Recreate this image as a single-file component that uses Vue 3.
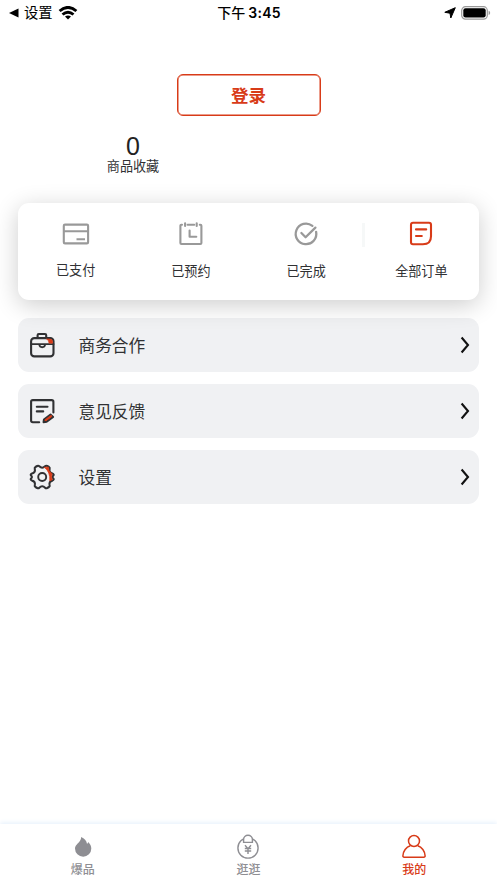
<script setup>
const orders = [
  { id: 'paid', label: '已支付' },
  { id: 'booked', label: '已预约' },
  { id: 'done', label: '已完成' },
  { id: 'all', label: '全部订单' },
]
const menu = [
  { id: 'business', label: '商务合作' },
  { id: 'feedback', label: '意见反馈' },
  { id: 'settings', label: '设置' },
]
</script>

<template>
  <div class="screen">
    <header class="status">
      <div class="status-left">
        <svg class="back" width="10" height="10" viewBox="0 0 10 10"><path d="M0 5 9.5.4V9.6Z" fill="#000" /></svg>
        <span class="back-label">设置</span>
        <svg class="wifi" width="20" height="14" viewBox="0 0 20 14">
          <g fill="none" stroke="#000" stroke-width="2.9">
            <path d="M1.6 5Q10-2.2 18.4 5" /><path d="M4.5 8.5Q10 3.8 15.5 8.5" />
          </g>
          <path d="M7 10.5Q10 8.4 13 10.5L10 13.6Z" fill="#000" />
        </svg>
      </div>
      <div class="time"><span>下午</span><b>3:45</b></div>
      <div class="status-right">
        <svg width="12" height="12" viewBox="0 0 12 12"><path d="M11.3.7 6.8 11 6 6.2.8 5.3Z" fill="#000" stroke="#000" stroke-width="1" stroke-linejoin="round" /></svg>
        <svg width="30" height="14" viewBox="0 0 30 14">
          <rect x=".7" y=".7" width="25.6" height="12.4" rx="3.8" fill="none" stroke="#999" stroke-width="1.2" />
          <rect x="2.3" y="2.3" width="22.4" height="9.2" rx="2.2" fill="#000" />
          <path d="M27.6 4.8Q29.2 5.4 29.2 6.9T27.6 9Z" fill="#999" />
        </svg>
      </div>
    </header>

    <button class="login">登录</button>
    <div class="favorites">
      <strong>0</strong>
      <span>商品收藏</span>
    </div>

    <section class="orders">
      <div v-for="o in orders" :key="o.id" class="order" :class="o.id">
        <svg class="order-icon" width="30" height="30" viewBox="0 0 30 30" fill="none" stroke="#999" stroke-width="2.1" stroke-linecap="round" stroke-linejoin="round">
          <template v-if="o.id === 'paid'">
            <rect x="2.8" y="5.6" width="24.3" height="18.8" rx="1.2" /><path d="M3 12.2H27M15.5 20.2H24" stroke-linecap="butt" />
          </template>
          <template v-else-if="o.id === 'booked'">
            <path d="M6 5.8H5.4Q4.4 5.8 4.4 6.8V24Q4.4 25 5.4 25H24.4Q25.4 25 25.4 24V6.8Q25.4 5.8 24.4 5.8H23.8M11.6 5.8H18.2" />
            <path d="M9.1 4.2V7M20.7 4.2V7M13.6 11.6V17.7H20.3" />
          </template>
          <template v-else-if="o.id === 'done'">
            <path d="M21.4 6.8A10.3 10.3 0 1 0 25.1 12.8M10.4 14 14.6 18.2 24.4 8.6" stroke-width="2.3" />
          </template>
          <g v-else stroke="#d83b18">
            <path d="M5 5.7Q5 3.7 7 3.7H23Q25 3.7 25 5.7V17.2Q25 25.3 16.9 25.3H7Q5 25.3 5 23.3Z" />
            <path d="M10 10.4H20.2M10 17H15.8" />
          </g>
        </svg>
        <span class="order-label">{{ o.label }}</span>
      </div>
    </section>

    <nav class="menu">
      <div v-for="m in menu" :key="m.id" class="row">
        <svg width="30" height="30" viewBox="0 0 30 30" fill="none" stroke="#303133" stroke-width="2.1" stroke-linecap="round" stroke-linejoin="round">
          <template v-if="m.id === 'business'">
            <rect x="4.1" y="8.1" width="22.4" height="18.3" rx="3.2" />
            <path d="M10.6 7.8V5.2Q10.6 4 11.8 4H18Q19.2 4 19.2 5.2V7.8" />
            <path d="M4.1 14.1H26.5M12.3 14.5Q12.6 17.2 15.2 17.2T18.1 14.5" stroke-width="1.9" />
            <path d="M19.8 9H22.9Q25.6 9.2 25.6 11.8V13.2H22Q22 10.6 19.8 9Z" fill="#d83b18" stroke="#d83b18" stroke-width=".6" />
          </template>
          <template v-else-if="m.id === 'feedback'">
            <path d="M12.2 26.2H5.8Q4.1 26.2 4.1 24.5V5.6Q4.1 4.1 5.8 4.1H24.7Q26.4 4.1 26.4 5.7V16.5M9.8 10.8H20.5M9.8 15.4H16.2" />
            <path d="M16.9 23.5 23.5 18.4 26.2 20.9 19.7 25.8 16.5 26.2Z" fill="#d83b18" stroke-width="1.9" />
            <path d="M18.8 24 24.2 20" stroke="#d83b18" stroke-width="1.9" />
          </template>
          <template v-else>
            <path d="M10.2 4Q11.4 3.4 12.3 4.3Q15.2 7.2 18.1 4.3Q19 3.4 20.2 4L22 5Q23 5.7 22.6 7Q21.8 10.6 25.4 11.4Q26.4 11.7 26.7 12.8Q26.7 13.3 25.9 14Q25 15 25.9 16Q26.7 16.7 26.7 17.2Q26.4 18.3 25.4 18.6Q21.8 19.4 22.6 23Q23 24.3 22 25L20.2 26Q19 26.6 18.1 25.7Q15.2 22.8 12.3 25.7Q11.4 26.6 10.2 26L8.4 25Q7.4 24.3 7.8 23Q8.6 19.4 5 18.6Q4 18.3 3.7 17.2Q3.7 16.7 4.5 16Q5.4 15 4.5 14Q3.7 13.3 3.7 12.8Q4 11.7 5 11.4Q8.6 10.6 7.8 7Q7.4 5.7 8.4 5Z" stroke-width="2.1" />
            <path d="M17.6 5.4 21.3 5 22 8.6 25 11.8 24.5 15 25.2 17.7 22.8 18.8Q23.5 10 17.6 5.4Z" fill="#d83b18" stroke="#d83b18" stroke-width=".8" />
            <circle cx="15.2" cy="15" r="4" stroke-width="1.9" />
          </template>
        </svg>
        <span class="row-label">{{ m.label }}</span>
        <svg class="chevron" width="10" height="18" viewBox="0 0 10 18"><path d="M1.6 1.5 8 9 1.6 16.5" fill="none" stroke="#111" stroke-width="2.1" /></svg>
      </div>
    </nav>

    <footer class="tabs">
      <div class="tab">
        <svg width="28" height="28" viewBox="0 0 28 28"><path d="M12.2 4C15.4 5.3 17.5 7.8 18 10.7Q19 10.6 19.1 9C21.2 10.7 22.3 13 22.3 15.6A8.1 8.1 0 0 1 6 15.6C6 12.2 8.8 10.7 10.9 7.9Q12.2 6.1 12.2 4Z" fill="#8e8e93" /></svg>
        <span>爆品</span>
      </div>
      <div class="tab">
        <svg width="28" height="28" viewBox="0 0 28 28" fill="none" stroke="#8e8e93" stroke-width="1.4">
          <circle cx="14" cy="15" r="10.1" /><path d="M9.6 9.4V6.5A4.4 4.3 0 0 1 18.4 6.5V9.4Z" fill="#fff" /><path d="M11 12.2 14 15.6 17 12.2M10.8 15.5H17.2M10.8 18H17.2M14 15.3V21" />
        </svg>
        <span>逛逛</span>
      </div>
      <div class="tab active">
        <svg width="28" height="28" viewBox="0 0 28 28" fill="none" stroke="#d83b18" stroke-width="1.5"><circle cx="14" cy="8" r="5.5" /><path d="M10.3 12.7C6.2 14 3.1 18.2 2.9 22.7Q2.8 24.2 4.2 24.2H23.8Q25.2 24.2 25.1 22.7C24.9 18.2 21.8 14 17.7 12.7" /></svg>
        <span>我的</span>
      </div>
    </footer>
  </div>
</template>

<style>
body { margin: 0; background: #fff; }
</style>

<style scoped>
.screen { box-sizing: border-box; width: 100%; height: 883px; display: flex; flex-direction: column; overflow: hidden; background: #fff; color: #303133; font-family: Inter, "Noto Sans CJK SC", sans-serif; }
.status { height: 26px; flex: none; display: grid; grid-template-columns: 1fr auto 1fr; align-items: center; color: #000; padding: 0 6px 0 9px; }
.status-left { display: flex; align-items: center; }
.back-label { margin-left: 5px; font-size: 14.3px; line-height: 24px; }
.wifi { margin-left: 5px; }
.time { display: flex; gap: 3px; align-items: baseline; margin-right: 2px; font-size: 14px; line-height: 24px; font-weight: 500; letter-spacing: .1px; }
.time b { font-weight: 600; letter-spacing: .25px; }
.status-right { display: flex; align-items: center; justify-content: flex-end; gap: 5px; }
.login { box-sizing: border-box; width: 144px; height: 42px; flex: none; margin: 48px auto 0; padding: 0; border: 1px solid #d83b18; border-radius: 6px; background: #fff; color: #d83b18; font: 700 17.5px/40px "Noto Sans CJK SC", sans-serif; box-shadow: inset 0 0 0 .5px #d83b18; }
.favorites { width: 230px; height: 59px; margin: 18px 0 0 18px; display: flex; flex-direction: column; align-items: center; }
.favorites strong { font-family: "Liberation Sans", Arial, sans-serif; font-size: 25px; font-weight: 400; line-height: 25px; color: #222; }
.favorites span { font-family: "Noto Sans CJK SC", sans-serif; font-size: 13.1px; line-height: 14px; }
.orders { position: relative; z-index: 1; box-sizing: border-box; height: 97px; flex: none; margin: 10px 18px 0; padding-top: 15.5px; display: grid; grid-template-columns: repeat(4, 1fr); border-radius: 11px; background: #fff; box-shadow: 0 5px 24px rgba(0, 0, 0, .2); }
.order { position: relative; display: flex; flex-direction: column; align-items: center; }
.order-label { margin-top: 12.5px; font-size: 13.1px; line-height: 20px; }
.paid .order-label { margin-top: 11.2px; }
.all::before { content: ""; position: absolute; left: -2px; top: 4px; width: 3px; height: 24px; background: #f6f8f8; }
.menu { margin: 18px 18px 0; display: flex; flex-direction: column; gap: 12px; }
.row { box-sizing: border-box; height: 54px; padding: 0 9px; display: flex; align-items: center; border-radius: 11px; background: #f0f1f3; }
.row-label { margin-left: 21.5px; padding-top: 2px; font-size: 16.7px; line-height: 24px; }
.chevron { margin-left: auto; }
.tabs { height: 59px; flex: none; margin-top: auto; display: grid; grid-template-columns: repeat(3, 1fr); box-shadow: 0 -1px 5px #e3effb; background: #fff; }
.tab { padding-top: 9px; display: flex; flex-direction: column; align-items: center; color: #8e8e93; font-size: 12px; font-weight: 500; line-height: 17px; }
.active { color: #d83b18; }
</style>
